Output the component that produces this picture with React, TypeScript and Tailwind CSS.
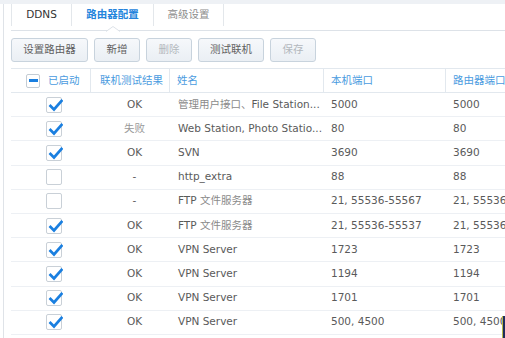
import React from "react";

type Row = { on: boolean; res: string; name: string; local: string; router: string };

const rows: Row[] = [
  { on: true, res: "OK", name: "管理用户接口、File Station...", local: "5000", router: "5000" },
  { on: true, res: "失败", name: "Web Station, Photo Statio...", local: "80", router: "80" },
  { on: true, res: "OK", name: "SVN", local: "3690", router: "3690" },
  { on: false, res: "-", name: "http_extra", local: "88", router: "88" },
  { on: false, res: "-", name: "FTP 文件服务器", local: "21, 55536-55567", router: "21, 55536-55567" },
  { on: true, res: "OK", name: "FTP 文件服务器", local: "21, 55536-55537", router: "21, 55536-55537" },
  { on: true, res: "OK", name: "VPN Server", local: "1723", router: "1723" },
  { on: true, res: "OK", name: "VPN Server", local: "1194", router: "1194" },
  { on: true, res: "OK", name: "VPN Server", local: "1701", router: "1701" },
  { on: true, res: "OK", name: "VPN Server", local: "500, 4500", router: "500, 4500" },
];

// chinese runs render a bit lighter than latin text in the original
const Mixed = ({ text }: { text: string }) => {
  const parts = text.split(/([\u4e00-\u9fff、]+)/).filter(Boolean);
  return (
    <>
      {parts.map((p, i) =>
        /[\u4e00-\u9fff、]/.test(p) ? (
          <span key={i} className="text-[#8a8a8a]">
            {p}
          </span>
        ) : (
          <span key={i}>{p}</span>
        )
      )}
    </>
  );
};

const Checkbox = ({ on }: { on: boolean }) => (
  <div className="w-[16px] h-[16px] border border-[#c9d0d7] rounded-[2px] bg-white relative">
    {on && (
      <svg className="absolute left-[1px] top-[0px]" width="15" height="15" viewBox="0 0 15 15">
        <path d="M2.5 8 L6 11.5 L13.5 3" fill="none" stroke="#1a7fe0" strokeWidth="2.7" strokeLinecap="square" />
      </svg>
    )}
  </div>
);

const Btn = ({ label, disabled }: { label: string; disabled?: boolean }) => (
  <div
    className={`h-[24px] flex items-center justify-center rounded-[3px] border border-[#c8d3dd] bg-gradient-to-b from-[#f6f8fb] to-[#eaeff4] ${
      disabled ? "text-[#b3b8bd]" : "text-[#5f5f5f]"
    }`}
  >
    {label}
  </div>
);

export default function App() {
  return (
    <div className="w-[505px] h-[338px] overflow-hidden bg-white relative font-['DejaVu_Sans','Noto_Sans_CJK_SC',sans-serif] text-[10.5px] text-[#5a5a5a]">
      <div className="h-[4px] bg-[#eef1f5]" />
      <div className="ml-[3px] border-l border-[#dfe3e8] pl-[7px] h-full">
        {/* tabs */}
        <div className="relative h-[27px] border-b border-[#dde2e8] flex items-start">
          <div className="h-[22px] w-[61px] flex items-center justify-center border-l border-r border-[#e3e7eb] text-[#333]">
            DDNS
          </div>
          <div className="h-[22px] w-[82px] flex items-center justify-center border-r border-[#e3e7eb] text-[#2484dc] font-bold">
            路由器配置
          </div>
          <div className="h-[22px] w-[70px] flex items-center justify-center border-r border-[#e3e7eb] text-[#8d8d8d]">
            高级设置
          </div>
          <svg className="absolute left-[95px] top-[22px]" width="14" height="6" viewBox="0 0 14 6">
            <polygon points="0,6 7,0 14,6" fill="white" />
            <polyline points="0,5.5 7,0.5 14,5.5" fill="none" stroke="#dde2e8" />
          </svg>
        </div>

        {/* toolbar */}
        <div className="mt-[7px] flex gap-[6px]">
          <div className="w-[77px]">
            <Btn label="设置路由器" />
          </div>
          <div className="w-[46px]">
            <Btn label="新增" />
          </div>
          <div className="w-[46px]">
            <Btn label="删除" disabled />
          </div>
          <div className="w-[66px]">
            <Btn label="测试联机" />
          </div>
          <div className="w-[46px]">
            <Btn label="保存" disabled />
          </div>
        </div>

        {/* table */}
        <div className="mt-[6px] w-[560px]">
          <div className="flex h-[25px] border-t border-b border-[#e2e8ee] text-[#4a9be0]">
            <div className="w-[80px] flex items-center pl-[15px] gap-[8px] border-r border-[#e2e8ee]">
              <div className="w-[14px] h-[14px] border border-[#c4ccd4] rounded-[2px] bg-white flex items-center justify-center">
                <div className="w-[9px] h-[3px] bg-[#1a7fe0]" />
              </div>
              <span>已启动</span>
            </div>
            <div className="w-[79px] flex items-center pl-[9px] border-r border-[#e2e8ee]">联机测试结果</div>
            <div className="w-[154px] flex items-center pl-[7px] border-r border-[#e2e8ee]">姓名</div>
            <div className="w-[122px] flex items-center pl-[7px] border-r border-[#e2e8ee]">本机端口</div>
            <div className="flex-1 flex items-center pl-[7px]">路由器端口</div>
          </div>
          {rows.map((r, i) => (
            <div key={i} className="flex h-[24.2px] border-b border-[#edf0f4] items-center whitespace-nowrap">
              <div className="w-[80px] flex items-center pl-[35px]">
                <Checkbox on={r.on} />
              </div>
              <div className={`w-[79px] text-center pl-[8px] ${r.res === "失败" ? "text-[#999]" : ""}`}>{r.res}</div>
              <div className="w-[154px] pl-[8px] overflow-hidden">
                <Mixed text={r.name} />
              </div>
              <div className="w-[122px] pl-[7px]">{r.local}</div>
              <div className="flex-1 pl-[7px]">{r.router}</div>
            </div>
          ))}
        </div>
      </div>
      <div className="absolute right-0 bottom-0 w-[3px] h-[22px] bg-[#1f2d5c] border-l border-[#b7b84a]" />
    </div>
  );
}
